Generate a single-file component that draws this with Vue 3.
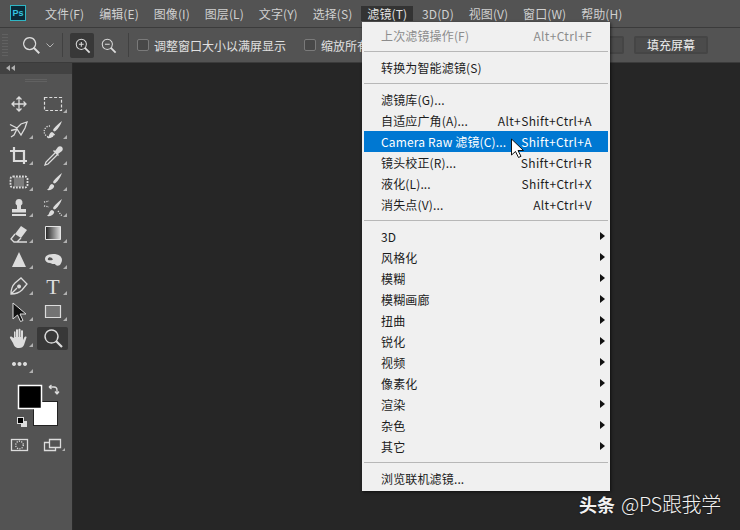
<script setup>
const menus = [
  { label: '文件(F)' }, { label: '编辑(E)' }, { label: '图像(I)' }, { label: '图层(L)' },
  { label: '文字(Y)' }, { label: '选择(S)' }, { label: '滤镜(T)', open: true }, { label: '3D(D)' },
  { label: '视图(V)' }, { label: '窗口(W)' }, { label: '帮助(H)' }
]

const brush = 'M21 3c-3 2-6 5-8.500 8-.500 1-.500 1.500 0 2 .500.500 1 .500 2 0 3-2.500 5-6 6.500-10zM11 14c-2 .500-2.500 2-3 3.500-.300 1-1 1.500-2 2.500 3 .500 6-.500 7-3 .400-1 .200-2-2-3z'
const tools = [
  { name: 'move', shapes: [{ c: 'line', d: 'M12 5v14M5 12h14M9.500 7.500 12 5l2.500 2.500M9.500 16.500 12 19l2.500-2.500M7.500 9.500 5 12l2.500 2.500M16.500 9.500 19 12l-2.500 2.500' }] },
  { name: 'marquee', corner: true, shapes: [{ c: 'dash', d: 'M3.500 5.500h17v13h-17z' }] },
  { name: 'lasso', corner: true, shapes: [{ c: 'line', d: 'M3 6.500 10 10l4-4 6-2-2 6-4 7-4-6-6 1.500M9.500 12 7 17l-3 2' }] },
  { name: 'quick', corner: true, shapes: [{ c: 'dots', d: 'M9 8a5.500 5.500 0 1 0 5 7' }, { c: 'solid', d: brush }] },
  { name: 'crop', corner: true, shapes: [{ c: 'thick', d: 'M7 3v14h13M3 7h14v13' }] },
  { name: 'dropper', corner: true, shapes: [{ c: 'solid', d: 'M14 7l3-4c1-1 3-1 4 0s1 3 0 4l-4 3 1 1-1 1-5-5 1-1z' }, { c: 'line', d: 'M14 9l-9 9-1 3 3-1 9-9' }] },
  { name: 'patch', corner: true, shapes: [{ c: 'gray', d: 'M7 7h10v10H7z' }, { c: 'dashThick', d: 'M6 6.500h12c1.500 0 2.500 1 2.500 2.500v6c0 1.500-1 2.500-2.500 2.500H6c-1.500 0-2.500-1-2.500-2.500V9c0-1.500 1-2.500 2.500-2.500z' }] },
  { name: 'brush', corner: true, shapes: [{ c: 'solid', d: brush }] },
  { name: 'stamp', corner: true, shapes: [{ c: 'solid', d: 'M12 3a3.500 3.500 0 0 0-2 6.400V13H5v3.500h14V13h-5V9.400A3.500 3.500 0 0 0 12 3zM5 18h14v2H5z' }] },
  { name: 'history', corner: true, shapes: [{ c: 'solid', d: brush }, { c: 'dots', d: 'M3 6l5-1M3 10l5 1M17 15l4 5' }] },
  { name: 'eraser', corner: true, shapes: [{ c: 'solid', d: 'M14 4l6 4-6 8-6-4z' }, { c: 'line', d: 'M8 12l-4 5 3 3h13M14 16l-4 4' }] },
  { name: 'gradient', corner: true, shapes: [{ c: 'grad', d: 'M4.500 4.500h15v13h-15z' }] },
  { name: 'blur', corner: true, shapes: [{ c: 'solid', d: 'M12 4l7 15H5z' }] },
  { name: 'sponge', corner: true, shapes: [{ c: 'solid', d: 'M4 11c0-3 3-5 8-5 5 0 9 2 9 6 0 2-1 3-2 5-2 1-4 1-5-1-2 0-3 0-5-1-3 0-5-2-5-4zM8 9.500c-1 .500-1.500 1.500-1 2.500 1.500.500 3.500.500 5-.500-1-1.500-2.500-2.500-4-2z' }] },
  { name: 'pen', corner: true, shapes: [{ c: 'line', d: 'M4 20c0-5 1-8 4-11l6-5 6 6-5 6c-3 3-6 4-11 4zM4 20l6-6' }, { c: 'solid', d: 'M12 10.500a2 2 0 1 0 .100 0z' }] },
  { name: 'type', corner: true, text: 'T' },
  { name: 'select', corner: true, shapes: [{ c: 'arrow', d: 'M6 3v16l4.500-4 3 6.500 2.500-1-3-6.500h6z' }] },
  { name: 'rect', corner: true, shapes: [{ c: 'box', d: 'M4.500 5.500h15v12h-15z' }] },
  { name: 'hand', corner: true, shapes: [{ c: 'solid', d: 'M7 12V6c0-1 1.500-1 1.500 0v5H9V4c0-1 2-1 2 0v7h.500V3.500c0-1 2-1 2 0V11h.500V5c0-1 2-1 2 0v9l1.500-3c.700-1 2.300-.500 2 .500L17 19c-1 2-2 3-5 3-3.500 0-5-2-6-5l-3-5c-.500-1 1-2 2-1z' }] },
  { name: 'zoom', active: true, shapes: [{ c: 'line', d: 'M10.500 4a6.500 6.500 0 1 0 .01 0z' }, { c: 'thick', d: 'M15 15l6 6' }] },
  { name: 'more', corner: true, shapes: [{ c: 'solid', d: 'M7 10a2 2 0 1 0 .01 0zM12.500 10a2 2 0 1 0 .01 0zM18 10a2 2 0 1 0 .01 0z' }] }
]

const filterMenu = [
  [{ label: '上次滤镜操作(F)', keys: 'Alt+Ctrl+F', disabled: true }],
  [{ label: '转换为智能滤镜(S)' }],
  [
    { label: '滤镜库(G)...' },
    { label: '自适应广角(A)...', keys: 'Alt+Shift+Ctrl+A' },
    { label: 'Camera Raw 滤镜(C)...', keys: 'Shift+Ctrl+A', active: true },
    { label: '镜头校正(R)...', keys: 'Shift+Ctrl+R' },
    { label: '液化(L)...', keys: 'Shift+Ctrl+X' },
    { label: '消失点(V)...', keys: 'Alt+Ctrl+V' }
  ],
  ['3D', '风格化', '模糊', '模糊画廊', '扭曲', '锐化', '视频', '像素化', '渲染', '杂色', '其它'].map(label => ({ label, arrow: true })),
  [{ label: '浏览联机滤镜...' }]
]
</script>

<template>
  <div class="app">
    <svg class="defs" width="0" height="0">
      <defs>
        <linearGradient id="toolGrad" x1="0" x2="1" y1="0" y2="0">
          <stop offset="0" stop-color="#222" />
          <stop offset="1" stop-color="#ddd" />
        </linearGradient>
      </defs>
    </svg>

    <header class="menubar">
      <div class="logo">Ps</div>
      <nav class="menus">
        <span v-for="m in menus" :key="m.label" class="menu-title" :class="{ open: m.open }">{{ m.label }}</span>
      </nav>
    </header>

    <section class="options">
      <div class="grip"></div>
      <svg class="opt-tool" width="22" height="22" viewBox="0 0 24 24">
        <path class="line" d="M10.500 4a6.500 6.500 0 1 0 .01 0z" />
        <path class="thick" d="M15 15l6 6" />
      </svg>
      <svg class="chev" width="10" height="10" viewBox="0 0 10 10"><path d="M1.500 3.500 5 7l3.500-3.500" /></svg>
      <div class="vsep first"></div>
      <button class="opt-btn pressed">
        <svg width="19" height="19" viewBox="0 0 24 24">
          <path class="line" d="M10.500 4a6.500 6.500 0 1 0 .01 0zM7.500 10.500h6M10.500 7.500v6" />
          <path class="thick" d="M15 15l6 6" />
        </svg>
      </button>
      <button class="opt-btn">
        <svg width="19" height="19" viewBox="0 0 24 24">
          <path class="line" d="M10.500 4a6.500 6.500 0 1 0 .01 0zM7.500 10.500h6" />
          <path class="thick" d="M15 15l6 6" />
        </svg>
      </button>
      <div class="vsep second"></div>
      <label class="check"><i></i>调整窗口大小以满屏显示</label>
      <label class="check clipped"><i></i>缩放所有</label>
      <div class="btns">
        <span class="pill blank"></span>
        <span class="pill">填充屏幕</span>
      </div>
    </section>

    <main class="workspace">
      <aside class="toolbar">
        <div class="collapse">
          <svg width="9" height="7" viewBox="0 0 9 7"><path class="tick" d="M4 0v6L0 3zM9 0v6L5 3z" /></svg>
        </div>
        <div class="panel-grip"></div>
        <div class="tools">
          <div v-for="t in tools" :key="t.name" class="tool" :class="{ active: t.active, corner: t.corner }">
            <svg width="24" height="24" viewBox="0 0 24 24">
              <text v-if="t.text" class="t-glyph" x="12" y="19.500" text-anchor="middle">{{ t.text }}</text>
              <path v-for="(s, i) in t.shapes" :key="i" :class="s.c" :d="s.d" />
            </svg>
          </div>
        </div>
        <svg class="colors" width="72" height="80" viewBox="0 0 72 80">
          <rect x="33.500" y="22.500" width="24" height="24" fill="#fff" stroke="#222" />
          <rect x="18.500" y="6.500" width="23" height="23" fill="#000" stroke="#fff" stroke-width="1.500" />
          <path class="line" d="M50 8h4c2 0 3 1 3 3v4M49 8l2.500-2M49 8l2.500 2M57 15l-2-2.500M57 15l2-2.500" />
          <rect x="21" y="42" width="6" height="6" fill="#ddd" />
          <rect x="17.500" y="38.500" width="6" height="6" fill="#000" stroke="#ddd" />
          <rect x="11.500" y="60.500" width="16" height="11" class="line" />
          <circle cx="19.500" cy="66" r="3.800" class="dots" />
          <path class="line" d="M49.500 60.500h11v8h-11zM49.500 63.500h-5v8h11v-3" />
          <path class="tick" d="M65 72v-3l-3 3z" />
        </svg>
      </aside>
      <div class="canvas"></div>
    </main>

    <div class="dropdown">
      <template v-for="(group, g) in filterMenu" :key="g">
        <div v-if="g" class="sep"></div>
        <div
          v-for="item in group"
          :key="item.label"
          class="item"
          :class="{ disabled: item.disabled, active: item.active }"
        >
          <span>{{ item.label }}</span>
          <span v-if="item.keys" class="keys">{{ item.keys }}</span>
          <i v-if="item.arrow" class="caret"></i>
        </div>
      </template>
      <svg class="cursor" width="18" height="22" viewBox="0 0 18 22">
        <path d="M1.500 1v16l4-3.500 3 6 2.500-1.200-3-5.800h5.500z" />
      </svg>
    </div>

    <div class="watermark"><b>头条</b><span>@PS跟我学</span></div>
  </div>
</template>

<style>
body { background: #262626; }
</style>

<style scoped>
.app {
  width: 740px;
  height: 530px;
  overflow: hidden;
  position: relative;
  display: flex;
  flex-direction: column;
  background: #262626;
  font: 12px "Noto Sans CJK SC", "Noto Sans", sans-serif;
  color: #d0d0d0;
}
.defs { display: block; }

.menubar {
  height: 28px;
  flex: none;
  box-sizing: border-box;
  display: flex;
  align-items: center;
  padding-left: 10px;
  background: #535353;
  border-bottom: 1px solid #3b3b3b;
}
.logo {
  width: 16px;
  height: 16px;
  margin-top: -1px;
  box-sizing: border-box;
  border: 1px solid #2fb6c4;
  background: #0a2a38;
  color: #35c4e0;
  font: 700 9px/14px "Liberation Sans", sans-serif;
  text-align: center;
}
.menus {
  display: flex;
  margin-left: 13px;
  height: 15px;
  margin-top: -1px;
  align-items: center;
}
.menu-title {
  padding: 0 6px;
  margin-right: 2.900px;
  line-height: 15px;
  white-space: nowrap;
  letter-spacing: 0.100px;
}
.menu-title.open { background: #333; color: #e4e4e4; }

.options {
  height: 35px;
  flex: none;
  box-sizing: border-box;
  display: flex;
  align-items: center;
  background: #535353;
  border-bottom: 1px solid #3b3b3b;
}
.grip {
  width: 6px;
  height: 22px;
  margin-left: 2px;
  background: repeating-linear-gradient(0deg, #616161 0 1px, transparent 1px 3px);
}
.opt-tool { margin-left: 12px; }
.chev { margin-left: 3px; }
.chev path { fill: none; stroke: #b5b5b5; }
.vsep { width: 1px; height: 24px; background: #414141; }
.vsep.first { margin: 0 7px 0 7px; }
.vsep.second { margin: 0 8px 0 6px; }
.opt-btn {
  width: 24px;
  height: 25px;
  padding: 0;
  margin-right: 2px;
  border: 0;
  border-radius: 2px;
  background: transparent;
  display: flex;
  align-items: center;
  justify-content: center;
}
.opt-btn.pressed { background: #383838; }
.check {
  display: flex;
  align-items: center;
  gap: 5px;
  margin-right: 18px;
  white-space: nowrap;
  color: #e0e0e0;
}
.check i {
  width: 10px;
  height: 10px;
  border: 1px solid #7a7a7a;
  border-radius: 2px;
  background: #484848;
}
.clipped { margin-right: 0; }
.btns {
  margin-left: auto;
  padding-right: 32px;
  display: flex;
  gap: 10px;
}
.pill {
  width: 74px;
  height: 18px;
  box-sizing: border-box;
  border: 2px solid #454545;
  border-radius: 2px;
  background: #4b4b4b;
  text-align: center;
  line-height: 14px;
  color: #eee;
}

.workspace {
  flex: 1;
  display: flex;
  min-height: 0;
}
.toolbar {
  width: 72px;
  flex: none;
  background: #535353;
  border-right: 1px solid #2a2a2a;
  display: flex;
  flex-direction: column;
}
.collapse {
  height: 11px;
  background: #424242;
  padding-left: 6px;
  display: flex;
  align-items: center;
}
.panel-grip {
  height: 4px;
  margin: 4px 25px 0;
  background: repeating-linear-gradient(0deg, #616161 0 1px, transparent 1px 2px);
}
.tools {
  margin: 9px 0 0 2px;
  display: grid;
  grid-template-columns: 34px 34px;
  grid-auto-rows: 26px;
}
.tool {
  position: relative;
  display: flex;
  align-items: center;
  justify-content: center;
}
.tool.active::before {
  content: "";
  position: absolute;
  left: 1px;
  right: 2px;
  top: 2px;
  bottom: 1px;
  background: #383838;
  border-radius: 2px;
}
.tool.corner::after {
  content: "";
  position: absolute;
  right: 3px;
  bottom: 4px;
  border-style: solid;
  border-width: 0 0 4px 4px;
  border-color: transparent transparent #b0b0b0 transparent;
}
.tool svg { position: relative; }
.colors { display: block; margin-top: 2px; }

.line, .thick, .dash, .dots, .dashThick {
  fill: none;
  stroke: #dcdcdc;
}
.line { stroke-width: 1.300; }
.thick { stroke-width: 2.200; }
.dash { stroke-width: 1.200; stroke-dasharray: 3 1.800; }
.dots { stroke-width: 1.300; stroke-dasharray: 1.200 1.200; }
.dashThick { stroke-width: 1.800; stroke-dasharray: 1.800 1.200; }
.solid { fill: #dcdcdc; fill-rule: evenodd; }
.gray { fill: #7b7b7b; }
.grad { fill: url(#toolGrad); stroke: #e4e4e4; }
.arrow { fill: #111; stroke: #dcdcdc; stroke-width: 1; }
.box { fill: #737373; stroke: #dcdcdc; stroke-width: 1.200; }
.tick { fill: #b0b0b0; }
.t-glyph { font: 400 22px "Liberation Serif", serif; fill: #dcdcdc; }

.canvas { flex: 1; background: #262626; }

.dropdown {
  position: absolute;
  left: 362px;
  top: 22px;
  width: 248px;
  height: 469px;
  box-sizing: border-box;
  padding: 3px 2px 2px;
  background: #f0f0f0;
  color: #1c1c1c;
  box-shadow: 1px 1px 3px rgba(0, 0, 0, 0.6);
}
.item {
  position: relative;
  height: 21px;
  display: flex;
  align-items: center;
  justify-content: space-between;
  padding: 0 16px 0 17px;
  line-height: 21px;
  white-space: nowrap;
  letter-spacing: 0.150px;
}
.item.disabled { color: #8c8c8c; }
.item.active { background: #0078d2; color: #fff; }
.keys { letter-spacing: 0.350px; }
.caret {
  position: absolute;
  right: 3px;
  top: 6px;
  border-style: solid;
  border-width: 4px 0 4px 5px;
  border-color: transparent transparent transparent #111;
}
.sep {
  height: 1px;
  margin: 5px 0;
  background: #b7b7b7;
}
.cursor {
  position: absolute;
  left: 148px;
  top: 116px;
}
.cursor path { fill: #fff; stroke: #111; stroke-width: 1; }

.watermark {
  position: absolute;
  left: 579px;
  top: 491px;
  display: flex;
  align-items: center;
  gap: 6px;
  color: #f2f2f2;
  text-shadow: 0 0 2px rgba(0, 0, 0, 0.7);
}
.watermark b { font-size: 18px; font-weight: 700; line-height: 26px; }
.watermark span { font: 300 20px/26px "Noto Sans CJK SC", "Noto Sans", sans-serif; letter-spacing: -0.300px; }
</style>
